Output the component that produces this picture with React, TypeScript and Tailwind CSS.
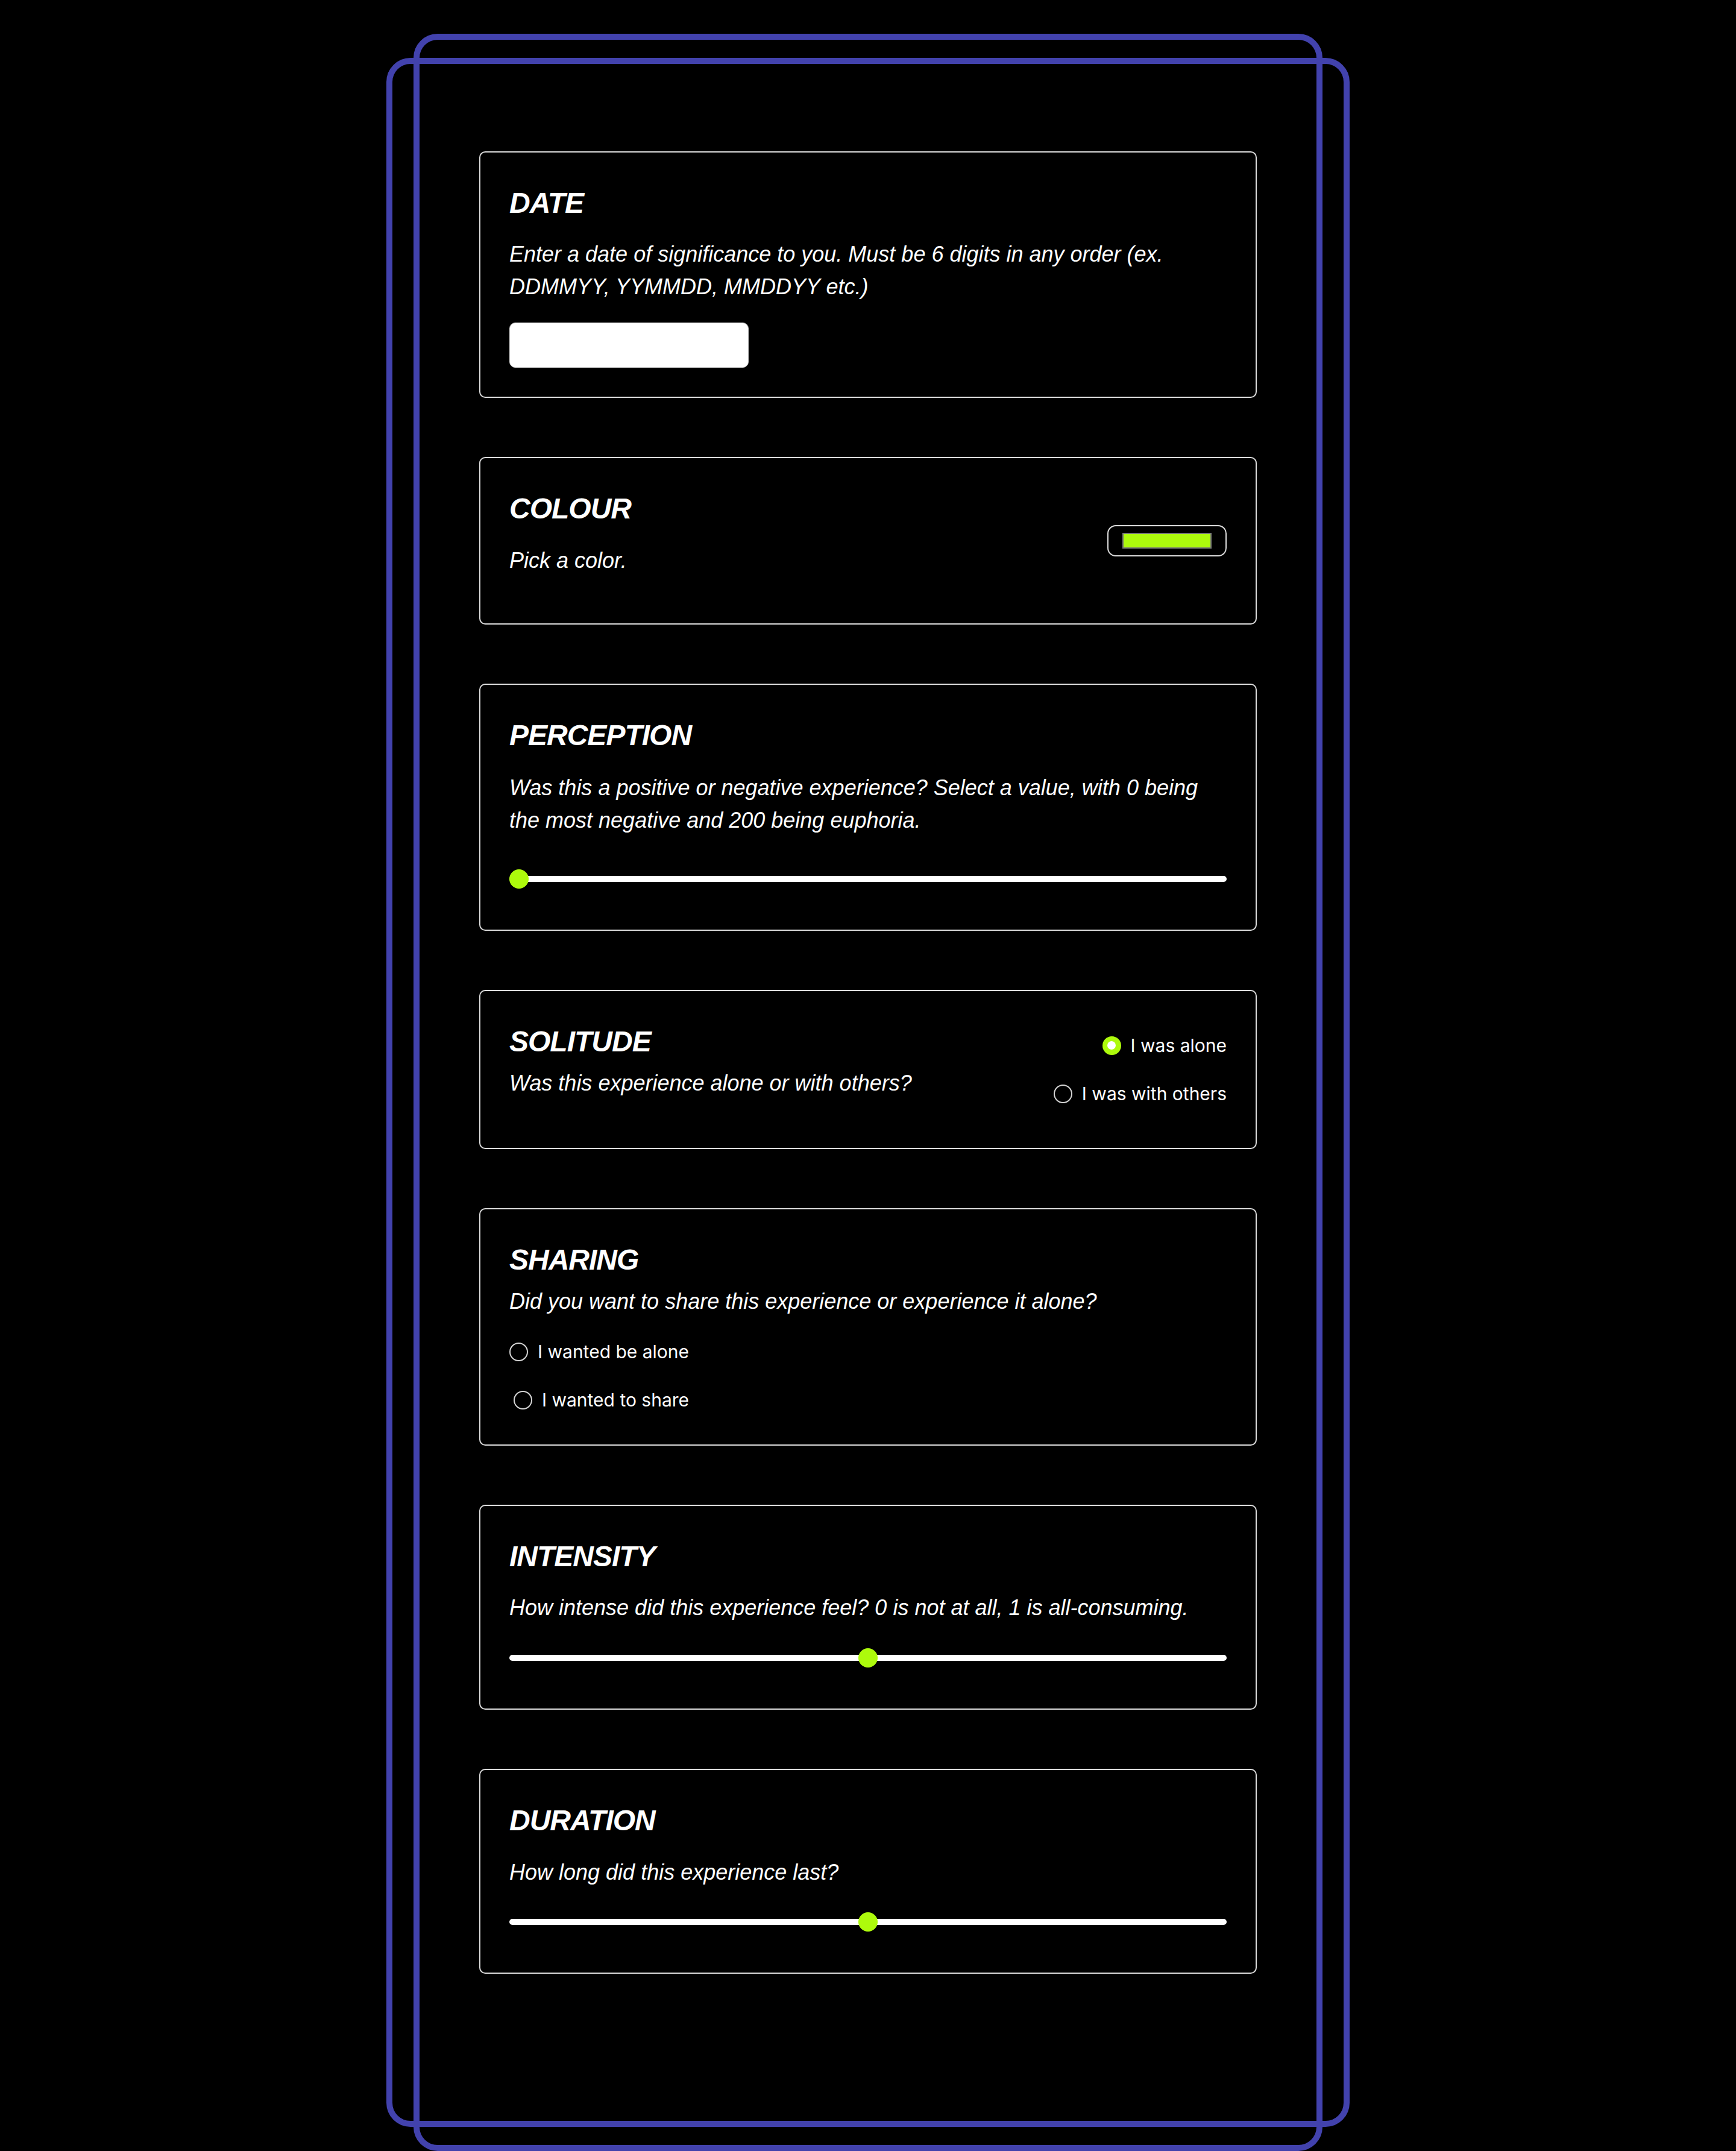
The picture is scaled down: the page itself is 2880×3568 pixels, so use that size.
import React from 'react'

function Card ({ children, className = '' }: { children: React.ReactNode, className?: string }): React.ReactElement {
  return (
    <section className={`w-full rounded-[10px] border-2 border-[#dcdcdc] bg-black p-[48px] ${className}`}>
      {children}
    </section>
  )
}

function Heading ({ children }: { children: React.ReactNode }): React.ReactElement {
  return <h2 className="text-[48px] leading-[72px] font-bold italic tracking-[-1px] text-white">{children}</h2>
}

function Slider ({ middle = false }: { middle?: boolean }): React.ReactElement {
  return (
    <div className="relative flex h-[32px] w-full items-center">
      <div className="h-[10px] w-full rounded-full bg-white" />
      <div className={`absolute top-0 h-[32px] w-[32px] rounded-full bg-[#adfa0c] ${middle ? 'left-[calc(50%-16px)]' : 'left-0'}`} />
    </div>
  )
}

function Radio ({ label, checked = false }: { label: string, checked?: boolean }): React.ReactElement {
  return (
    <label className="flex h-[52px] items-center gap-[16px]">
      {checked
        ? (
          <span className="flex h-[31px] w-[31px] items-center justify-center rounded-full bg-[#adfa0c]">
            <span className="h-[14px] w-[14px] rounded-full bg-white" />
          </span>
          )
        : <span className="h-[31px] w-[31px] rounded-full border-2 border-[#d4d4d4]" />}
      <span className="font-['Inter',sans-serif] text-[30px] text-white">{label}</span>
    </label>
  )
}

export default function App (): React.ReactElement {
  return (
    <div className="flex min-h-[3568px] justify-center bg-black pt-[56px] font-['Liberation_Sans',Arial,sans-serif]">
      <div className="relative h-[3512px] w-[1508px] rounded-[40px] border-[10px] border-[#4242ad]">
        <div className="pointer-events-none absolute -left-[55px] top-[30px] h-[3432px] w-[1598px] rounded-[40px] border-[10px] border-[#4242ad]" />

        <form className="flex flex-col gap-[98px] px-[99px] pt-[185px]">
          <Card>
            <Heading>DATE</Heading>
            <p className="mt-[22px] text-[36px] leading-[54px] italic text-white">
              Enter a date of significance to you. Must be 6 digits in any order (ex. DDMMYY, YYMMDD, MMDDYY etc.)
            </p>
            <input
              type="text"
              className="mt-[32px] block h-[75px] w-[397px] rounded-[10px] border border-[#cfcfcf] bg-white"
            />
          </Card>

          <Card className="flex items-center justify-between">
            <div>
              <Heading>COLOUR</Heading>
              <p className="mt-[23px] mb-[29px] text-[36px] leading-[54px] italic text-white">Pick a color.</p>
            </div>
            <div className="flex h-[52px] w-[198px] items-center justify-center rounded-[14px] border-2 border-[#dcdcdc]">
              <div className="h-[26px] w-[148px] border-2 border-[#767676] bg-[#adfa0c]" />
            </div>
          </Card>

          <Card>
            <Heading>PERCEPTION</Heading>
            <p className="mt-[24px] max-w-[1170px] text-[36px] leading-[54px] italic text-white">
              Was this a positive or negative experience? Select a value, with 0 being the most negative and 200 being euphoria.
            </p>
            <div className="mt-[54px] mb-[20px]">
              <Slider />
            </div>
          </Card>

          <Card className="flex items-center justify-between">
            <div>
              <Heading>SOLITUDE</Heading>
              <p className="mt-[6px] mb-[32px] text-[36px] leading-[54px] italic text-white">Was this experience alone or with others?</p>
            </div>
            <div className="flex flex-col items-end gap-[28px]">
              <Radio label="I was alone" checked />
              <Radio label="I was with others" />
            </div>
          </Card>

          <Card>
            <Heading>SHARING</Heading>
            <p className="mt-[6px] text-[36px] leading-[54px] italic text-white">
              Did you want to share this experience or experience it alone?
            </p>
            <div className="mt-[30px] flex w-fit flex-col items-end gap-[28px]">
              <Radio label="I wanted be alone" />
              <Radio label="I wanted to share" />
            </div>
          </Card>

          <Card>
            <Heading>INTENSITY</Heading>
            <p className="mt-[22px] text-[36px] leading-[54px] italic text-white">
              How intense did this experience feel? 0 is not at all, 1 is all-consuming.
            </p>
            <div className="mt-[40px] mb-[20px]">
              <Slider middle />
            </div>
          </Card>

          <Card>
            <Heading>DURATION</Heading>
            <p className="mt-[23px] text-[36px] leading-[54px] italic text-white">How long did this experience last?</p>
            <div className="mt-[39px] mb-[20px]">
              <Slider middle />
            </div>
          </Card>
        </form>
      </div>
    </div>
  )
}
